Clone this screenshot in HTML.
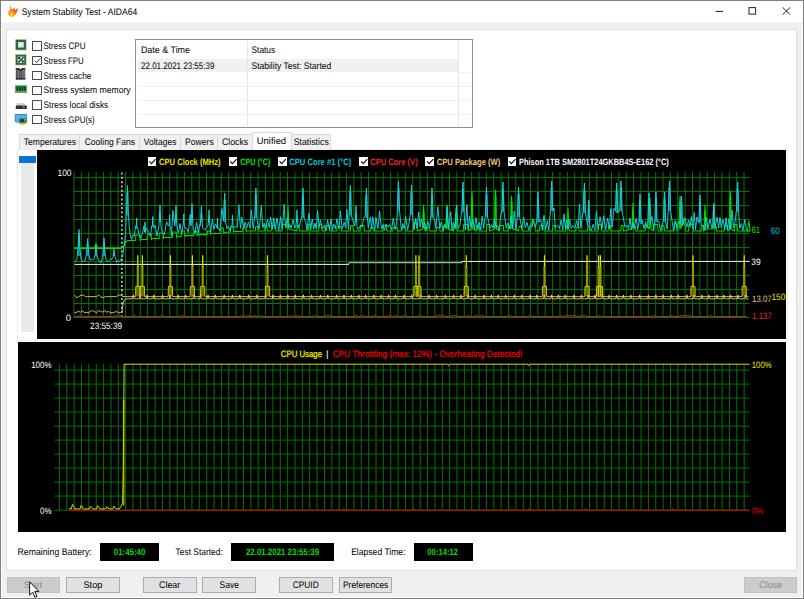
<!DOCTYPE html>
<html>
<head>
<meta charset="utf-8">
<title>System Stability Test - AIDA64</title>
<style>
html,body{margin:0;padding:0;}
body{width:804px;height:599px;position:relative;overflow:hidden;background:#f0f0f0;font-family:"Liberation Sans",sans-serif;font-size:9.6px;color:#000;}
.abs{position:absolute;display:block;}
.t{position:absolute;left:0;top:0;z-index:5;text-rendering:geometricPrecision;white-space:pre;line-height:14px;height:14px;transform-origin:0 0;font-family:"Liberation Sans",sans-serif;}
#win{position:absolute;left:0;top:0;width:804px;height:599px;box-sizing:border-box;border:1px solid #808080;box-shadow:inset 0 0 0 1px #fff;}
#title{position:absolute;left:1px;top:1px;width:802px;height:21px;background:#fff;border-bottom:1px solid #f6f6f6;}
#panel{position:absolute;left:6px;top:29.4px;width:791px;height:541.4px;box-sizing:border-box;background:#fff;border:1px solid #dfdfdf;}
.cb{position:absolute;left:32.2px;width:9.4px;height:9.4px;box-sizing:border-box;border:1px solid #4a4a4a;background:#fff;border-radius:0.6px;}
.lcb{position:absolute;top:157.4px;width:8.8px;height:8.8px;background:#fff;}
#list{position:absolute;left:135px;top:39px;width:338px;height:88.5px;box-sizing:border-box;border:1px solid #8a8f98;background:#fff;}
.hl{position:absolute;height:1px;background:#f0f0f0;left:138px;width:333px;}
.vl{position:absolute;width:1px;background:#e6e6e6;top:41px;}
.tab{position:absolute;top:134px;height:15.5px;box-sizing:border-box;border:1px solid #d9d9d9;border-bottom:none;background:#f0f0f0;}
.tab.sel{top:132px;height:18px;background:#fff;border-color:#d9d9d9;z-index:3;}
#pane{position:absolute;left:17px;top:148.5px;width:771px;height:192px;box-sizing:border-box;border:1px solid #ececec;background:#fff;}
.blk{position:absolute;background:#000;}
.btn{position:absolute;top:577px;height:15.6px;box-sizing:border-box;border:1px solid #adadad;background:#e1e1e1;}
.btn.dis{background:#cccccc;border-color:#bfbfbf;}
</style>
</head>
<body>
<div id="win"></div>
<div id="title"></div>
<!-- app icon (flame) -->
<svg class="abs" style="left:8px;top:5px" width="10.2" height="12.2" viewBox="0 0 10.2 12.2">
<defs><radialGradient id="fl" cx="0.36" cy="0.78" r="0.55"><stop offset="0" stop-color="#fff04a"/><stop offset="0.22" stop-color="#ffc31a"/><stop offset="0.55" stop-color="#fb7a12"/><stop offset="1" stop-color="#f2560c"/></radialGradient></defs>
<path d="M2,0 C2.9,1.6 3.4,3 3.7,4.6 C4.6,4.4 5.6,3.8 6.3,2.8 C6.7,3.6 6.9,4.4 7.1,5.2 C8,4.8 9,4 9.9,3 C9.9,5 9.4,6.8 8.3,8.3 C7.2,9.9 5.8,11.4 4,11.9 C2.6,11.7 1.4,10.9 0.9,10 C0.3,9.2 0,8.3 0.3,7.6 C0.7,7.6 1,7.5 1.3,7.3 C0.8,6.9 0.5,6.5 0.2,5.9 C0.9,6.1 1.6,6.1 2.1,5.8 C2.5,4 2.5,2 2,0Z" fill="url(#fl)"/>
</svg>
<!-- window controls -->
<svg class="abs" style="left:700px;top:0" width="104" height="23" viewBox="0 0 104 23">
<path d="M15.6,11.4H23.2" stroke="#222" stroke-width="1.05" fill="none"/>
<rect x="49" y="7.6" width="6.6" height="6.6" stroke="#222" stroke-width="1" fill="none"/>
<path d="M82.6,7.3L90.2,14.7M90.2,7.3L82.6,14.7" stroke="#222" stroke-width="1" fill="none"/>
</svg>

<div id="panel"></div>

<!-- stress checkboxes -->
<div class="cb" style="top:41.4px"></div>
<div class="cb" style="top:56.1px"></div>
<div class="cb" style="top:70.8px"></div>
<div class="cb" style="top:85.5px"></div>
<div class="cb" style="top:100.2px"></div>
<div class="cb" style="top:114.9px"></div>
<svg class="abs" style="left:32.6px;top:56.1px" width="9" height="9" viewBox="0 0 9 9"><path d="M1.8,4.6L3.7,6.5L7.4,2.4" stroke="#222" stroke-width="0.9" fill="none"/></svg>

<!-- stress icons -->
<svg class="abs" style="left:15px;top:39px" width="12" height="12" viewBox="0 0 12 12">
<rect x="0.3" y="0.3" width="11.2" height="11" fill="#c8a85a"/><rect x="0.9" y="0.9" width="10" height="9.8" fill="#1f6b45"/><rect x="3" y="3" width="5.8" height="5.6" fill="#d6dcd8"/><rect x="4.2" y="4.2" width="3.4" height="3.2" fill="#f3f3f3"/>
</svg>
<svg class="abs" style="left:15px;top:53.6px" width="12" height="12" viewBox="0 0 12 12">
<rect x="0.3" y="0.3" width="11.2" height="11" fill="#c8a85a"/><rect x="0.9" y="0.9" width="10" height="9.8" fill="#1f6b45"/><rect x="2.6" y="2.6" width="6.6" height="6.4" fill="#e4e8e4"/>
<path d="M3.3,8.5L8.5,3.1" stroke="#1a1a1a" stroke-width="1.1"/><circle cx="4.2" cy="4.2" r="1.15" fill="#1a1a1a"/><circle cx="7.7" cy="7.5" r="1.15" fill="#1a1a1a"/>
</svg>
<svg class="abs" style="left:15px;top:68.4px" width="12" height="12" viewBox="0 0 12 12">
<defs><linearGradient id="cg" x1="0" x2="1" y1="0" y2="0"><stop offset="0" stop-color="#4a4a4a"/><stop offset="0.3" stop-color="#8c8c8c"/><stop offset="0.55" stop-color="#5c5c5c"/><stop offset="0.8" stop-color="#9a9a9a"/><stop offset="1" stop-color="#555"/></linearGradient></defs>
<path d="M0.8,0.3H4.3L5.6,2L6.9,0.3H10.3V11.4H0.8Z" fill="url(#cg)"/>
<path d="M0.8,0.3H4.3L5.6,2L6.9,0.3H10.3V1.6L8.6,1.4L5.6,3.2L2.6,1.4L0.8,1.6Z" fill="#161616"/>
<rect x="0.8" y="10.3" width="9.5" height="1.1" fill="#111"/>
<path d="M2.6,3V10M4.4,3.6V10M6.6,3.6V10M8.4,3V10" stroke="#3c3c3c" stroke-width="0.6"/>
</svg>
<svg class="abs" style="left:14.6px;top:84.8px" width="12" height="9" viewBox="0 0 12 9">
<path d="M0.2,0.3H11.8V7.9H6.6V6.9H5.6V7.9H0.2Z" fill="#2f9a50"/>
<rect x="1.3" y="1.5" width="1.9" height="4.2" fill="#173f26"/><rect x="3.9" y="1.5" width="1.9" height="4.2" fill="#173f26"/><rect x="6.5" y="1.5" width="1.9" height="4.2" fill="#173f26"/><rect x="9" y="1.5" width="1.8" height="4.2" fill="#173f26"/>
<rect x="1.4" y="6.3" width="2.6" height="1.3" fill="#d9a02a"/><rect x="7.6" y="6.3" width="2.6" height="1.3" fill="#d9a02a"/>
<rect x="0.2" y="0.3" width="11.6" height="0.8" fill="#5cc47a"/>
</svg>
<svg class="abs" style="left:15px;top:102px" width="13" height="8" viewBox="0 0 13 8">
<path d="M2,1.1H9.4L10.6,3.8H0.9Z" fill="#d2d2d2"/>
<rect x="0.8" y="3.5" width="11" height="3.2" rx="0.5" fill="#2e2e2e"/>
<rect x="7.7" y="4.3" width="1.9" height="1.5" fill="#46c84e"/>
<rect x="0.8" y="6.3" width="11" height="0.5" fill="#111"/>
</svg>
<svg class="abs" style="left:14px;top:113px" width="14" height="13" viewBox="0 0 14 13">
<rect x="0.8" y="1" width="12" height="7.7" fill="#1f7ad6"/><rect x="1.6" y="1.8" width="10.4" height="6" fill="#58b2f6"/>
<path d="M1.2,8.7H5.4V10.5H2.4Z" fill="#9cc4e6"/>
<rect x="5.1" y="5.2" width="7.7" height="5.1" fill="#2f8a48"/><rect x="6.6" y="6.3" width="3.2" height="2.7" fill="#26302a"/><rect x="10.3" y="6.1" width="1.6" height="1.2" fill="#6cc486"/>
<rect x="6.2" y="10.3" width="4.6" height="1.3" fill="#f0921e"/>
</svg>

<!-- event list -->
<div id="list"></div>
<div class="abs" style="left:138px;top:58.6px;width:320.4px;height:13.8px;background:#f0f0f0"></div>
<div class="hl" style="top:86.3px"></div>
<div class="hl" style="top:100.3px"></div>
<div class="hl" style="top:114.2px"></div>
<div class="hl" style="top:72.4px;left:458.4px;width:13px"></div>
<div class="vl" style="left:247.2px;height:85px"></div>
<div class="vl" style="left:458.3px;height:85px"></div>

<!-- tabs -->
<div id="pane"></div>
<div class="tab" style="left:19.4px;width:61px"></div>
<div class="tab" style="left:79.4px;width:61px"></div>
<div class="tab" style="left:139.4px;width:42px"></div>
<div class="tab" style="left:180.4px;width:38px"></div>
<div class="tab" style="left:217.4px;width:36px"></div>
<div class="tab" style="left:290.4px;width:40.5px"></div>
<div class="tab sel" style="left:251.6px;width:40px"></div>

<!-- left strip in tab page -->
<div class="abs" style="left:21.3px;top:163px;width:13px;height:169.4px;background:#e7eaeb"></div>
<div class="abs" style="left:19.1px;top:156px;width:16.8px;height:6.8px;background:#0a72da"></div>

<!-- charts -->
<div class="blk" style="left:37px;top:150px;width:749.3px;height:188.5px"></div>
<div class="blk" style="left:18px;top:342.3px;width:768.3px;height:189.3px"></div>
<svg class="abs" style="left:37px;top:150px" width="749.3" height="188.5" viewBox="37 150 749.3 188.5">
<path d="M74.00,171.8V317.6M81.36,171.8V317.6M88.73,171.8V317.6M96.09,171.8V317.6M103.45,171.8V317.6M110.81,171.8V317.6M118.18,171.8V317.6M125.54,171.8V317.6M132.90,171.8V317.6M140.27,171.8V317.6M147.63,171.8V317.6M154.99,171.8V317.6M162.36,171.8V317.6M169.72,171.8V317.6M177.08,171.8V317.6M184.44,171.8V317.6M191.81,171.8V317.6M199.17,171.8V317.6M206.53,171.8V317.6M213.90,171.8V317.6M221.26,171.8V317.6M228.62,171.8V317.6M235.99,171.8V317.6M243.35,171.8V317.6M250.71,171.8V317.6M258.08,171.8V317.6M265.44,171.8V317.6M272.80,171.8V317.6M280.16,171.8V317.6M287.53,171.8V317.6M294.89,171.8V317.6M302.25,171.8V317.6M309.62,171.8V317.6M316.98,171.8V317.6M324.34,171.8V317.6M331.71,171.8V317.6M339.07,171.8V317.6M346.43,171.8V317.6M353.79,171.8V317.6M361.16,171.8V317.6M368.52,171.8V317.6M375.88,171.8V317.6M383.25,171.8V317.6M390.61,171.8V317.6M397.97,171.8V317.6M405.34,171.8V317.6M412.70,171.8V317.6M420.06,171.8V317.6M427.42,171.8V317.6M434.79,171.8V317.6M442.15,171.8V317.6M449.51,171.8V317.6M456.88,171.8V317.6M464.24,171.8V317.6M471.60,171.8V317.6M478.97,171.8V317.6M486.33,171.8V317.6M493.69,171.8V317.6M501.05,171.8V317.6M508.42,171.8V317.6M515.78,171.8V317.6M523.14,171.8V317.6M530.51,171.8V317.6M537.87,171.8V317.6M545.23,171.8V317.6M552.60,171.8V317.6M559.96,171.8V317.6M567.32,171.8V317.6M574.68,171.8V317.6M582.05,171.8V317.6M589.41,171.8V317.6M596.77,171.8V317.6M604.14,171.8V317.6M611.50,171.8V317.6M618.86,171.8V317.6M626.23,171.8V317.6M633.59,171.8V317.6M640.95,171.8V317.6M648.31,171.8V317.6M655.68,171.8V317.6M663.04,171.8V317.6M670.40,171.8V317.6M677.77,171.8V317.6M685.13,171.8V317.6M692.49,171.8V317.6M699.86,171.8V317.6M707.22,171.8V317.6M714.58,171.8V317.6M721.94,171.8V317.6M729.31,171.8V317.6M736.67,171.8V317.6M744.03,171.8V317.6M73.5,317.50H749.6M73.5,303.50H749.6M73.5,289.50H749.6M73.5,275.50H749.6M73.5,261.50H749.6M73.5,247.50H749.6M73.5,233.50H749.6M73.5,219.50H749.6M73.5,205.50H749.6M73.5,191.50H749.6M73.5,177.50H749.6" stroke="#007800" stroke-width="1" fill="none"/>
<path d="M121.9,172.4V317" stroke="#e4e4e4" stroke-width="1.4" stroke-dasharray="2.1 2.23" fill="none"/>
<path d="M74.5,316.5 L77.5,316.5 L80.5,315.9 L83.5,316.5 L86.5,316.5 L89.5,316.5 L92.5,316.5 L95.5,316.5 L98.5,316.5 L101.5,316.5 L104.5,316.5 L107.5,316.5 L110.5,316.5 L113.5,316.5 L116.5,315.9 L119.5,315.9 L122.5,316.5 L125.5,316.5 L128.5,316.5 L131.5,316.5 L134.5,315.9 L137.5,316.5 L140.5,316.5 L143.5,316.5 L146.5,316.5 L149.5,316.5 L152.5,316.5 L155.5,316.5 L158.5,316.5 L161.5,315.9 L164.5,316.5 L167.5,316.5 L170.5,316.5 L173.5,316.5 L176.5,316.5 L179.5,316.5 L182.5,315.9 L185.5,316.5 L188.5,316.5 L191.5,316.5 L194.5,316.5 L197.5,316.5 L200.5,316.5 L203.5,316.5 L206.5,316.5 L209.5,316.5 L212.5,316.5 L215.5,316.5 L218.5,316.5 L221.5,316.5 L224.5,316.5 L227.5,316.5 L230.5,316.5 L233.5,316.5 L236.5,316.5 L239.5,316.5 L242.5,315.9 L245.5,316.5 L248.5,315.9 L251.5,316.5 L254.5,315.9 L257.5,316.5 L260.5,315.9 L263.5,316.5 L266.5,316.5 L269.5,316.5 L272.5,316.5 L275.5,316.5 L278.5,316.5 L281.5,316.5 L284.5,316.5 L287.5,316.5 L290.5,315.9 L293.5,316.5 L296.5,315.9 L299.5,316.5 L302.5,316.5 L305.5,316.5 L308.5,316.5 L311.5,316.5 L314.5,315.9 L317.5,316.5 L320.5,316.5 L323.5,316.5 L326.5,315.9 L329.5,315.9 L332.5,316.5 L335.5,316.5 L338.5,316.5 L341.5,316.5 L344.5,316.5 L347.5,316.5 L350.5,316.5 L353.5,316.5 L356.5,315.9 L359.5,316.5 L362.5,315.9 L365.5,316.5 L368.5,316.5 L371.5,316.5 L374.5,315.9 L377.5,316.5 L380.5,316.5 L383.5,316.5 L386.5,316.5 L389.5,315.9 L392.5,316.5 L395.5,315.9 L398.5,316.5 L401.5,316.5 L404.5,315.9 L407.5,316.5 L410.5,316.5 L413.5,316.5 L416.5,316.5 L419.5,315.9 L422.5,316.5 L425.5,316.5 L428.5,316.5 L431.5,316.5 L434.5,316.5 L437.5,315.9 L440.5,315.9 L443.5,315.9 L446.5,316.5 L449.5,316.5 L452.5,315.9 L455.5,315.9 L458.5,316.5 L461.5,316.5 L464.5,316.5 L467.5,315.9 L470.5,316.5 L473.5,316.5 L476.5,315.9 L479.5,316.5 L482.5,315.9 L485.5,316.5 L488.5,316.5 L491.5,316.5 L494.5,316.5 L497.5,316.5 L500.5,316.5 L503.5,316.5 L506.5,316.5 L509.5,315.9 L512.5,316.5 L515.5,316.5 L518.5,316.5 L521.5,316.5 L524.5,316.5 L527.5,316.5 L530.5,315.9 L533.5,316.5 L536.5,316.5 L539.5,316.5 L542.5,316.5 L545.5,316.5 L548.5,316.5 L551.5,316.5 L554.5,316.5 L557.5,316.5 L560.5,315.9 L563.5,316.5 L566.5,315.9 L569.5,315.9 L572.5,315.9 L575.5,315.9 L578.5,316.5 L581.5,315.9 L584.5,315.9 L587.5,316.5 L590.5,316.5 L593.5,316.5 L596.5,316.5 L599.5,315.9 L602.5,316.5 L605.5,316.5 L608.5,316.5 L611.5,316.5 L614.5,316.5 L617.5,316.5 L620.5,316.5 L623.5,316.5 L626.5,316.5 L629.5,316.5 L632.5,316.5 L635.5,316.5 L638.5,316.5 L641.5,316.5 L644.5,316.5 L647.5,316.5 L650.5,316.5 L653.5,315.9 L656.5,316.5 L659.5,316.5 L662.5,316.5 L665.5,316.5 L668.5,316.5 L671.5,315.9 L674.5,316.5 L677.5,316.5 L680.5,315.9 L683.5,315.9 L686.5,315.9 L689.5,315.9 L692.5,316.5 L695.5,316.5 L698.5,316.5 L701.5,316.5 L704.5,316.5 L707.5,316.5 L710.5,315.9 L713.5,316.5 L716.5,316.5 L719.5,316.5 L722.5,316.5 L725.5,316.5 L728.5,316.5 L731.5,316.5 L734.5,316.5 L737.5,316.5 L740.5,316.5 L743.5,316.5 L746.5,316.5" stroke="#cc2222" stroke-width="1.05" fill="none"/>
<path d="M288.0,212.0V228.0M423.6,211.0V228.0M447.0,211.0V228.0M456.0,214.0V228.0M472.0,198.0V228.0M495.5,196.0V228.0M511.6,202.0V228.0M568.0,214.0V228.0M633.0,209.0V228.0M650.0,204.0V228.0M680.0,202.0V228.0M705.0,211.0V228.0M714.0,209.0V228.0M730.3,197.0V228.0" stroke="#009400" stroke-width="2.2" fill="none"/>
<path d="M74.5,248.2H121.5" stroke="#00c800" stroke-width="1.6" fill="none"/>
<path d="M74.5,248.2 L94.3,248.2 L96.0,243.8 L97.7,248.2 L121.5,248.2 L123.5,246.5 L125.5,242.0 L128.0,240.5 L129.0,240.5 L135.6,240.5 L135.9,235.0 L139.9,235.0 L140.2,240.5 L140.5,239.5 L147.2,239.5 L147.5,234.0 L151.2,234.0 L151.5,239.5 L151.8,238.5 L159.1,238.5 L159.4,233.0 L163.0,233.0 L163.3,238.5 L163.6,237.5 L172.3,237.5 L172.6,232.0 L176.3,232.0 L176.6,237.5 L176.9,236.4 L181.3,236.4 L181.6,230.9 L184.6,230.9 L184.9,236.4 L185.2,235.6 L193.7,235.6 L194.0,231.1 L196.9,231.1 L197.2,235.6 L197.5,234.6 L207.2,234.6 L207.5,231.1 L210.3,231.1 L210.6,234.6 L210.9,233.4 L220.6,233.4 L220.9,227.9 L223.5,227.9 L223.8,233.4 L224.1,232.3 L230.4,232.3 L230.7,226.8 L233.2,226.8 L233.5,232.3 L233.8,231.4 L242.7,231.4 L243.0,227.9 L245.9,227.9 L246.2,231.4 L246.5,231.0 L255.3,231.0 L255.6,226.5 L257.6,226.5 L257.9,231.0 L258.2,231.0 L264.6,231.0 L264.9,225.5 L267.0,225.5 L267.3,231.0 L267.6,231.0 L271.2,231.0 L271.5,225.5 L275.6,225.5 L275.9,231.0 L276.2,231.0 L282.0,231.0 L282.3,224.5 L286.4,224.5 L287.1,229.0 L287.7,214.0 L288.0,206.0 L288.3,214.0 L288.9,229.0 L296.9,231.0 L297.2,225.5 L299.0,225.5 L299.3,231.0 L299.6,231.0 L308.2,231.0 L308.5,224.5 L310.6,224.5 L310.9,231.0 L311.2,231.0 L318.8,231.0 L319.1,224.5 L321.7,224.5 L322.0,231.0 L322.3,231.0 L325.4,231.0 L325.7,225.5 L329.4,225.5 L329.7,231.0 L330.0,231.0 L336.7,231.0 L337.0,226.5 L341.1,226.5 L341.4,231.0 L341.7,231.0 L350.4,231.0 L350.7,225.5 L353.0,225.5 L353.3,231.0 L353.6,231.0 L360.1,231.0 L360.4,225.5 L364.0,225.5 L364.3,231.0 L364.6,231.0 L370.5,231.0 L370.8,227.5 L372.8,227.5 L373.1,231.0 L373.4,231.0 L382.7,231.0 L383.0,225.5 L386.4,225.5 L386.7,231.0 L387.0,231.0 L392.9,231.0 L393.2,227.5 L397.2,227.5 L397.5,231.0 L397.8,231.0 L401.9,231.0 L402.2,227.5 L405.2,227.5 L405.5,231.0 L405.8,231.0 L413.0,231.0 L413.3,225.5 L415.0,221.8 L417.0,225.5 L417.3,231.0 L417.6,231.0 L422.7,229.0 L423.3,213.0 L423.6,205.0 L423.9,213.0 L424.5,229.0 L425.6,231.0 L425.9,227.5 L429.0,227.5 L429.3,231.0 L429.6,231.0 L436.3,231.0 L436.6,227.5 L439.6,227.5 L439.9,231.0 L440.2,231.0 L443.6,231.0 L443.9,227.5 L444.8,224.0 L446.1,229.0 L446.7,213.0 L447.0,205.0 L447.3,213.0 L447.9,229.0 L453.6,231.0 L453.9,224.5 L455.1,229.0 L455.7,216.0 L456.0,208.0 L456.3,216.0 L456.9,229.0 L457.8,231.0 L458.1,231.0 L463.3,231.0 L463.6,224.5 L467.8,224.5 L468.1,231.0 L468.4,231.0 L471.1,229.0 L471.7,200.0 L472.0,192.0 L472.3,200.0 L472.9,229.0 L476.2,231.0 L476.5,225.5 L479.4,225.5 L479.7,231.0 L480.0,231.0 L486.5,231.0 L486.8,224.5 L489.1,224.5 L489.4,231.0 L489.7,231.0 L494.6,229.0 L495.2,198.0 L495.5,190.0 L495.8,198.0 L496.4,229.0 L499.2,231.0 L499.5,225.5 L503.4,225.5 L503.7,231.0 L504.0,231.0 L508.0,231.0 L508.3,224.5 L510.7,229.0 L511.3,204.0 L511.6,196.0 L511.9,204.0 L512.5,229.0 L518.6,231.0 L518.9,226.5 L521.7,226.5 L522.0,231.0 L522.3,231.0 L530.7,231.0 L531.0,225.5 L532.9,218.9 L535.0,225.5 L535.3,231.0 L535.6,231.0 L539.6,231.0 L539.9,225.5 L543.8,225.5 L544.1,231.0 L544.4,231.0 L552.6,231.0 L552.9,225.5 L554.9,225.5 L555.2,231.0 L555.5,231.0 L565.4,231.0 L565.7,225.5 L567.1,229.0 L567.7,216.0 L568.0,208.0 L568.3,216.0 L568.9,229.0 L569.8,231.0 L570.1,231.0 L575.9,231.0 L576.2,227.5 L578.9,227.5 L579.2,231.0 L579.5,231.0 L587.6,231.0 L587.9,226.5 L589.6,226.5 L589.9,231.0 L590.2,231.0 L598.2,231.0 L598.5,224.5 L601.1,224.5 L601.4,231.0 L601.7,231.0 L608.3,231.0 L608.6,225.5 L610.5,225.5 L610.8,231.0 L611.1,231.0 L620.9,231.0 L621.2,225.5 L623.1,225.5 L623.4,231.0 L623.7,231.0 L632.1,229.0 L632.7,211.0 L633.0,203.0 L633.3,211.0 L633.9,229.0 L635.5,226.5 L635.8,231.0 L636.1,231.0 L645.1,231.0 L645.4,224.5 L649.1,229.0 L649.7,206.0 L650.0,198.0 L650.3,206.0 L650.9,229.0 L653.4,231.0 L653.7,224.5 L657.7,224.5 L658.0,231.0 L658.3,231.0 L661.9,231.0 L662.2,225.5 L664.1,225.5 L664.4,231.0 L664.7,231.0 L674.0,231.0 L674.3,224.5 L675.3,221.1 L676.6,224.5 L676.9,231.0 L677.2,231.0 L679.1,229.0 L679.7,204.0 L680.0,196.0 L680.3,204.0 L680.9,229.0 L682.9,218.2 L685.0,225.5 L685.3,231.0 L685.6,231.0 L688.6,231.0 L688.9,224.5 L693.1,224.5 L693.4,231.0 L693.7,231.0 L701.1,231.0 L701.4,225.5 L703.2,225.5 L703.5,231.0 L704.1,229.0 L704.7,213.0 L705.0,205.0 L705.3,213.0 L705.9,229.0 L713.1,229.0 L713.7,211.0 L714.0,203.0 L714.3,211.0 L714.9,229.0 L716.2,226.5 L716.5,231.0 L716.8,231.0 L724.2,231.0 L724.5,225.5 L727.5,225.5 L727.8,231.0 L728.1,231.0 L729.4,229.0 L730.0,199.0 L730.3,191.0 L730.6,199.0 L731.2,229.0 L734.6,231.0 L734.9,224.5 L737.1,224.5 L737.4,231.0 L737.7,231.0 L747.7,231.0 L748.0,226.5 L748.7,221.0 L749.7,226.5 L750.0,231.0 L748.5,231.5" stroke="#00dc00" stroke-width="1.05" fill="none" stroke-linejoin="round"/>
<path d="M127.4,192.5V215.5M160.0,212.0V222.0M176.0,212.7V222.0M192.0,210.6V222.0M201.4,213.0V222.0M209.0,217.0V222.0M224.7,200.0V222.0M255.9,195.0V218.0M297.0,217.0V222.0M303.0,195.0V218.0M350.3,192.5V215.5M356.0,213.0V222.0M366.4,195.0V218.0M398.5,188.6V211.6M411.5,192.0V215.0M432.0,195.0V218.0M463.0,189.0V212.0M486.5,194.0V217.0M503.0,189.0V212.0M518.6,194.0V217.0M538.0,199.0V222.0M551.7,188.0V211.0M584.4,190.0V213.0M588.8,207.0V222.0M616.7,190.0V213.0M621.0,188.0V211.0M640.0,201.0V222.0M649.0,200.0V222.0M656.0,199.0V222.0M664.6,199.0V222.0M669.5,188.0V211.0M681.4,203.0V222.0M700.0,202.0V222.0M713.8,211.0V222.0M737.6,189.0V212.0M79.0,234.5V256.0M87.6,243.6V256.0M96.0,250.0V256.0M104.0,243.0V256.0M114.0,254.0V256.0" stroke="#178490" stroke-width="2.1" fill="none"/>
<path d="M74.5,262.3 L76.0,260.7 L77.0,258.8 L78.2,246.8 L79.0,229.5 L79.8,246.8 L81.0,259.2 L82.0,261.2 L83.5,261.2 L85.0,260.9 L85.6,258.8 L86.8,251.3 L87.6,238.6 L88.4,251.3 L89.6,259.2 L91.0,259.7 L92.5,259.8 L94.0,258.8 L95.2,254.5 L96.0,245.0 L96.8,254.5 L98.0,259.2 L98.5,259.5 L100.0,262.4 L101.5,262.3 L102.0,258.8 L103.2,251.0 L104.0,238.0 L104.8,251.0 L106.0,259.2 L107.5,262.0 L109.0,260.5 L110.5,259.2 L112.0,258.8 L113.2,256.5 L114.0,249.0 L114.8,256.5 L116.0,259.2 L116.5,262.3 L118.0,261.0 L119.5,261.4 L121.0,259.2 L122.5,257.0 L124.0,246.0 L125.4,236.0 L126.4,214.0 L127.4,185.5 L128.3,212.0 L129.2,226.0 L130.4,236.0 L131.5,239.3 L132.9,235.1 L134.4,236.1 L135.6,226.0 L136.2,228.0 L136.7,218.0 L137.1,229.0 L137.8,228.0 L138.8,233.8 L140.6,238.3 L142.5,233.4 L143.9,226.0 L144.6,232.0 L145.0,222.0 L145.4,233.0 L146.1,228.0 L148.6,232.3 L150.5,236.1 L151.7,226.0 L152.4,226.5 L152.8,216.5 L153.2,227.5 L153.9,228.0 L155.2,225.0 L156.9,236.2 L158.9,226.0 L159.6,215.0 L160.0,205.0 L160.4,216.0 L161.1,228.0 L162.5,232.4 L164.4,234.5 L166.5,221.8 L168.5,226.0 L169.2,225.0 L169.6,215.0 L170.0,226.0 L170.7,228.0 L171.5,235.6 L172.9,210.5 L174.9,226.0 L175.6,215.7 L176.0,205.7 L176.4,216.7 L177.1,228.0 L178.5,232.8 L180.0,223.5 L181.7,233.9 L182.7,226.0 L183.4,224.0 L183.8,214.0 L184.2,225.0 L184.9,228.0 L186.9,228.5 L188.4,232.7 L190.2,214.4 L190.9,226.0 L191.6,213.6 L192.0,203.6 L192.4,214.6 L193.1,228.0 L195.0,233.4 L196.6,222.0 L198.3,233.1 L199.6,224.7 L200.3,226.0 L201.0,216.0 L201.4,206.0 L201.8,217.0 L202.5,228.0 L205.0,230.2 L206.3,227.9 L207.9,226.0 L208.6,220.0 L209.0,210.0 L209.4,221.0 L210.1,228.0 L210.7,231.8 L212.4,219.5 L213.7,229.4 L215.5,224.0 L216.4,226.0 L217.1,228.0 L217.5,218.0 L217.9,229.0 L218.6,228.0 L219.9,230.9 L222.0,208.6 L223.6,221.0 L224.2,203.0 L224.7,193.0 L225.1,204.0 L225.8,223.0 L226.8,228.6 L228.3,226.4 L230.1,230.9 L231.4,226.0 L232.1,225.0 L232.5,215.0 L232.9,226.0 L233.6,228.0 L235.6,226.0 L237.2,227.6 L238.9,204.8 L240.4,228.4 L241.8,217.3 L243.8,228.7 L245.1,221.9 L246.6,228.0 L248.4,221.9 L250.0,228.2 L251.3,210.0 L253.2,228.7 L254.8,216.0 L255.5,198.0 L255.9,188.0 L256.4,199.0 L257.0,218.0 L257.8,224.3 L259.3,229.3 L261.3,205.6 L262.8,227.9 L264.2,223.3 L265.8,228.6 L267.4,219.1 L269.3,227.6 L270.6,217.0 L272.3,229.1 L273.8,217.9 L275.1,229.1 L277.0,218.0 L278.7,230.4 L280.7,216.7 L282.3,229.0 L284.2,204.3 L285.5,227.6 L287.4,217.5 L288.6,227.8 L289.8,224.7 L291.1,228.1 L293.1,219.7 L294.7,227.9 L295.9,226.0 L296.6,220.0 L297.0,210.0 L297.4,221.0 L298.1,228.0 L299.3,226.0 L301.9,216.0 L302.6,198.0 L303.0,188.0 L303.4,199.0 L304.1,218.0 L305.8,221.9 L307.0,230.0 L309.0,213.3 L310.6,229.3 L312.3,219.0 L313.8,229.2 L315.0,223.1 L316.3,228.9 L317.6,210.4 L319.1,227.4 L320.4,219.8 L322.4,228.9 L324.4,225.4 L326.4,230.5 L327.6,220.0 L329.5,230.0 L331.1,218.9 L332.4,230.4 L333.7,224.1 L335.4,229.0 L336.9,218.7 L339.0,229.1 L340.3,211.0 L342.3,228.6 L344.2,222.2 L345.6,227.7 L346.9,209.5 L348.5,229.5 L349.2,213.5 L349.9,195.5 L350.3,185.5 L350.8,196.5 L351.4,215.5 L353.4,222.2 L354.9,226.0 L355.6,216.0 L356.0,206.0 L356.4,217.0 L357.1,228.0 L358.2,229.5 L360.3,225.6 L362.1,227.3 L363.5,218.8 L365.3,216.0 L365.9,198.0 L366.4,188.0 L366.8,199.0 L367.5,218.0 L368.3,227.8 L370.3,216.9 L371.6,228.9 L372.8,216.7 L374.6,230.1 L376.0,217.4 L377.9,228.5 L379.6,211.1 L381.4,228.9 L383.1,224.4 L384.4,230.4 L386.1,223.9 L388.2,227.1 L389.6,224.7 L391.6,229.8 L393.2,218.3 L395.1,229.6 L396.6,223.3 L397.4,209.6 L398.1,191.6 L398.5,181.6 L398.9,192.6 L399.6,211.6 L401.4,230.0 L402.7,223.5 L404.3,228.3 L405.6,215.9 L407.6,229.8 L409.2,222.3 L410.4,213.0 L411.1,195.0 L411.5,185.0 L411.9,196.0 L412.6,215.0 L414.0,230.0 L415.8,218.3 L417.0,228.3 L418.8,211.9 L420.1,227.0 L421.3,218.7 L423.2,227.7 L424.8,222.3 L426.1,230.6 L427.7,221.2 L429.6,228.2 L430.9,216.0 L431.6,198.0 L432.0,188.0 L432.4,199.0 L433.1,218.0 L434.6,219.3 L435.9,227.9 L437.9,206.8 L439.8,228.3 L441.3,222.0 L442.9,230.1 L444.2,225.1 L445.8,227.8 L447.1,206.3 L448.6,228.6 L450.7,211.8 L452.0,230.1 L453.3,222.2 L455.2,227.7 L456.7,205.0 L458.1,228.5 L459.9,225.1 L461.9,210.0 L462.6,192.0 L463.0,182.0 L463.4,193.0 L464.1,212.0 L465.3,230.0 L466.9,204.7 L468.2,229.4 L469.6,216.3 L470.9,227.4 L472.9,219.3 L474.4,229.3 L476.0,217.5 L477.8,229.6 L479.2,222.1 L480.9,230.0 L482.1,216.1 L483.7,228.4 L485.4,215.0 L486.1,197.0 L486.5,187.0 L486.9,198.0 L487.6,217.0 L488.7,222.3 L490.3,228.3 L491.6,224.7 L493.1,228.0 L494.3,218.5 L496.1,227.8 L497.3,225.3 L499.2,230.3 L500.5,217.1 L501.9,210.0 L502.6,192.0 L503.0,182.0 L503.4,193.0 L504.1,212.0 L506.2,228.4 L507.6,222.8 L509.6,229.0 L511.1,216.4 L512.8,228.4 L514.2,211.2 L516.0,229.7 L517.5,215.0 L518.1,197.0 L518.6,187.0 L519.1,198.0 L519.7,217.0 L521.8,228.8 L523.6,217.0 L525.3,227.5 L527.1,222.3 L528.7,230.2 L530.2,225.2 L531.9,227.2 L533.4,220.8 L535.4,227.5 L536.9,220.0 L537.5,202.0 L538.0,192.0 L538.5,203.0 L539.1,222.0 L540.8,219.7 L542.3,230.5 L544.0,215.3 L545.7,229.6 L547.4,220.7 L548.8,230.2 L550.6,209.0 L551.2,191.0 L551.7,181.0 L552.2,192.0 L552.8,211.0 L553.9,208.0 L555.3,227.7 L557.4,225.4 L559.4,228.5 L561.1,220.0 L562.8,230.1 L564.0,213.8 L565.3,227.3 L566.6,219.9 L568.0,229.2 L569.7,219.6 L571.2,228.4 L572.9,225.4 L575.0,228.0 L576.6,220.6 L578.2,227.3 L579.5,204.0 L580.9,228.3 L582.2,217.1 L583.3,211.0 L583.9,193.0 L584.4,183.0 L584.9,194.0 L585.5,213.0 L587.7,226.0 L588.3,210.0 L588.8,200.0 L589.2,211.0 L589.9,228.0 L591.4,230.4 L593.1,224.3 L595.0,229.9 L596.4,211.3 L598.1,229.3 L600.1,216.8 L602.0,228.7 L603.7,215.7 L605.7,229.8 L607.7,218.1 L609.4,228.6 L610.8,208.5 L612.1,227.1 L614.0,208.3 L615.6,211.0 L616.2,193.0 L616.7,183.0 L617.2,194.0 L617.8,213.0 L619.9,209.0 L620.5,191.0 L621.0,181.0 L621.5,192.0 L622.1,211.0 L622.9,215.6 L625.0,227.3 L626.9,225.1 L628.6,228.9 L630.0,218.1 L631.4,229.5 L632.9,222.5 L634.1,227.9 L636.1,218.3 L637.8,229.6 L638.9,222.0 L639.5,204.0 L640.0,194.0 L640.5,205.0 L641.1,224.0 L642.2,220.3 L644.1,228.6 L645.6,221.6 L647.0,227.9 L647.9,221.0 L648.5,203.0 L649.0,193.0 L649.5,204.0 L650.1,223.0 L651.9,216.4 L653.7,230.1 L654.9,220.0 L655.5,202.0 L656.0,192.0 L656.5,203.0 L657.1,222.0 L658.8,221.1 L660.5,230.3 L662.0,225.0 L663.5,220.0 L664.1,202.0 L664.6,192.0 L665.1,203.0 L665.7,222.0 L667.1,229.1 L668.4,209.0 L669.0,191.0 L669.5,181.0 L670.0,192.0 L670.6,211.0 L671.9,220.1 L673.6,230.6 L675.3,220.8 L676.9,228.7 L678.4,221.4 L680.3,224.0 L680.9,206.0 L681.4,196.0 L681.9,207.0 L682.5,226.0 L684.9,217.7 L686.8,227.1 L688.6,220.0 L690.0,227.2 L691.4,216.5 L692.8,228.3 L694.2,212.4 L695.6,229.7 L696.9,216.9 L698.9,223.0 L699.5,205.0 L700.0,195.0 L700.5,206.0 L701.1,225.0 L703.0,225.8 L704.9,230.7 L706.3,217.5 L708.0,228.3 L710.0,219.3 L712.0,228.3 L712.7,226.0 L713.3,214.0 L713.8,204.0 L714.2,215.0 L714.9,228.0 L717.1,217.1 L718.7,228.1 L720.0,217.5 L721.2,227.5 L722.9,219.4 L724.9,229.5 L726.1,217.7 L727.4,229.8 L728.8,218.8 L730.2,229.4 L732.2,210.3 L733.4,227.8 L734.9,222.6 L736.5,210.0 L737.1,192.0 L737.6,182.0 L738.1,193.0 L738.7,212.0 L739.7,228.4 L741.5,223.5 L742.8,230.4 L744.8,219.7 L746.5,230.3 L748.5,231.0" stroke="#18d4e2" stroke-width="0.95" fill="none" stroke-linejoin="round"/>
<path d="M74.5,264.4H349" stroke="#f4f4f4" stroke-width="1" fill="none"/>
<path d="M348,264L349.6,262.6H462" stroke="#a8a8a8" stroke-width="1.2" fill="none"/>
<path d="M461,262.4L463,261.4H749.6" stroke="#f4f4f4" stroke-width="1" fill="none"/>
<path d="M137.8,287V296.4M142.4,287V296.4M170.4,287V296.4M192.4,287V296.4M202.7,287V296.4M267.5,287V296.4M415.9,287V296.4M419.0,287V296.4M466.3,287V296.4M544.5,287V296.4M587.0,287V296.4M598.6,287V296.4M600.5,287V296.4M693.0,287V296.4M744.2,287V296.4" stroke="#6c6c00" stroke-width="3.4" fill="none"/>
<path d="M137.8,266V286.6M142.4,266V286.6M170.4,266V286.6M192.4,266V286.6M202.7,266V286.6M267.5,266V286.6M415.9,266V286.6M419.0,266V286.6M466.3,266V286.6M544.5,266V286.6M587.0,266V286.6M598.6,266V286.6M600.5,266V286.6M693.0,266V286.6M744.2,266V286.6" stroke="#969600" stroke-width="2.2" fill="none"/>
<path d="M137.8,255.2V266.4M142.4,255.2V266.4M170.4,255.2V266.4M192.4,255.2V266.4M202.7,255.2V266.4M267.5,255.2V266.4M415.9,255.2V266.4M419.0,255.2V266.4M466.3,255.2V266.4M544.5,255.2V266.4M587.0,255.2V266.4M598.6,255.2V266.4M600.5,255.2V266.4M693.0,255.2V266.4M744.2,255.2V266.4" stroke="#e4e400" stroke-width="1.25" fill="none"/>
<path d="M74.5,295.1 L76.7,297.8 L78.9,296.6 L81.1,295.1 L83.3,295.1 L85.5,296.6 L87.7,296.6 L89.9,296.6 L92.1,296.6 L94.3,296.6 L96.5,296.6 L98.7,295.1 L100.9,296.6 L103.1,297.8 L105.3,296.6 L107.5,296.6 L109.7,296.6 L111.9,296.6 L114.1,296.6 L116.3,296.6 L118.5,295.1 L120.7,295.1 L123.0,296.6 L135.6,296.6 L135.8,286.4 L139.8,286.4 L140.0,296.6 L140.2,296.6 L140.4,286.4 L144.4,286.4 L144.6,296.6 L168.2,296.6 L168.4,286.4 L172.4,286.4 L172.6,296.6 L190.2,296.6 L190.4,286.4 L194.4,286.4 L194.6,296.6 L200.5,296.6 L200.7,286.4 L204.7,286.4 L204.9,296.6 L265.3,296.6 L265.5,286.4 L269.5,286.4 L269.7,296.6 L413.7,296.6 L413.9,286.4 L417.9,286.4 L418.1,296.6 L416.8,296.6 L417.0,286.4 L421.0,286.4 L421.2,296.6 L464.1,296.6 L464.3,286.4 L468.3,286.4 L468.5,296.6 L542.3,296.6 L542.5,286.4 L546.5,286.4 L546.7,296.6 L584.8,296.6 L585.0,286.4 L589.0,286.4 L589.2,296.6 L596.4,296.6 L596.6,286.4 L600.6,286.4 L600.8,296.6 L598.3,296.6 L598.5,286.4 L602.5,286.4 L602.7,296.6 L690.8,296.6 L691.0,286.4 L695.0,286.4 L695.2,296.6 L742.0,296.6 L742.2,286.4 L746.2,286.4 L746.4,296.6 L748.5,296.6" stroke="#e0e000" stroke-width="0.9" fill="none" stroke-linejoin="round"/>
<path d="M74.5,312.8 L76.5,312.2 L78.5,311.4 L80.5,312.2 L82.5,310.6 L84.5,312.8 L86.5,312.2 L88.5,312.8 L90.5,311.4 L92.5,310.6 L94.5,311.4 L96.5,312.8 L98.5,310.6 L100.5,311.4 L102.5,312.2 L104.5,310.6 L106.5,312.2 L108.5,311.4 L110.5,312.8 L112.5,312.8 L114.5,312.2 L116.5,311.4 L118.5,312.8 L120.5,312.8 L122.0,311.5 L123.2,303.0 L124.5,299.5 L127.0,298.8 L130.0,298.8 L132.7,298.7 L133.4,294.9 L134.1,298.7 L136.4,298.9 L136.8,298.8 L139.5,298.7 L140.2,294.9 L140.9,298.7 L143.2,298.9 L143.6,298.8 L146.3,298.7 L147.0,294.9 L147.7,298.7 L150.0,298.9 L150.4,298.8 L153.1,298.7 L153.8,294.9 L154.5,298.7 L156.8,298.9 L159.2,298.8 L161.9,298.7 L162.6,294.9 L163.3,298.7 L165.6,298.9 L166.6,298.8 L169.3,298.7 L170.0,294.9 L170.7,298.7 L173.0,298.9 L174.8,298.8 L177.5,298.7 L178.2,294.9 L178.9,298.7 L181.2,298.9 L182.2,298.8 L184.9,298.7 L185.6,294.9 L186.3,298.7 L188.6,298.9 L190.4,298.8 L193.1,298.7 L193.8,294.9 L194.5,298.7 L196.8,298.9 L197.2,298.8 L199.9,298.7 L200.6,294.9 L201.3,298.7 L203.6,298.9 L204.6,298.8 L207.3,298.7 L208.0,294.9 L208.7,298.7 L211.0,298.9 L212.0,298.8 L214.7,298.7 L215.4,294.9 L216.1,298.7 L218.4,298.9 L220.8,298.8 L223.5,298.7 L224.2,294.9 L224.9,298.7 L227.2,298.9 L229.0,298.8 L231.7,298.7 L232.4,294.9 L233.1,298.7 L235.4,298.9 L236.4,298.8 L239.1,298.7 L239.8,294.9 L240.5,298.7 L242.8,298.9 L245.2,298.8 L247.9,298.7 L248.6,294.9 L249.3,298.7 L251.6,298.9 L253.4,298.8 L256.1,298.7 L256.8,294.9 L257.5,298.7 L259.8,298.9 L262.2,298.8 L264.9,298.7 L265.6,294.9 L266.3,298.7 L268.6,298.9 L269.6,298.8 L272.3,298.7 L273.0,294.9 L273.7,298.7 L276.0,298.9 L277.0,298.8 L279.7,298.7 L280.4,294.9 L281.1,298.7 L283.4,298.9 L284.4,298.8 L287.1,298.7 L287.8,294.9 L288.5,298.7 L290.8,298.9 L291.8,298.8 L294.5,298.7 L295.2,294.9 L295.9,298.7 L298.2,298.9 L300.0,298.8 L302.7,298.7 L303.4,294.9 L304.1,298.7 L306.4,298.9 L308.2,298.8 L310.9,298.7 L311.6,294.9 L312.3,298.7 L314.6,298.9 L317.0,298.8 L319.7,298.7 L320.4,294.9 L321.1,298.7 L323.4,298.9 L324.4,298.8 L327.1,298.7 L327.8,294.9 L328.5,298.7 L330.8,298.9 L333.2,298.8 L335.9,298.7 L336.6,294.9 L337.3,298.7 L339.6,298.9 L340.6,298.8 L343.3,298.7 L344.0,294.9 L344.7,298.7 L347.0,298.9 L348.0,298.8 L350.7,298.7 L351.4,294.9 L352.1,298.7 L354.4,298.9 L355.4,298.8 L358.1,298.7 L358.8,294.9 L359.5,298.7 L361.8,298.9 L362.2,298.8 L364.9,298.7 L365.6,294.9 L366.3,298.7 L368.6,298.9 L370.4,298.8 L373.1,298.7 L373.8,294.9 L374.5,298.7 L376.8,298.9 L377.8,298.8 L380.5,298.7 L381.2,294.9 L381.9,298.7 L384.2,298.9 L385.2,298.8 L387.9,298.7 L388.6,294.9 L389.3,298.7 L391.6,298.9 L392.0,298.8 L394.7,298.7 L395.4,294.9 L396.1,298.7 L398.4,298.9 L400.8,298.8 L403.5,298.7 L404.2,294.9 L404.9,298.7 L407.2,298.9 L408.2,298.8 L410.9,298.7 L411.6,294.9 L412.3,298.7 L414.6,298.9 L417.0,298.8 L419.7,298.7 L420.4,294.9 L421.1,298.7 L423.4,298.9 L425.8,298.8 L428.5,298.7 L429.2,294.9 L429.9,298.7 L432.2,298.9 L433.2,298.8 L435.9,298.7 L436.6,294.9 L437.3,298.7 L439.6,298.9 L442.0,298.8 L444.7,298.7 L445.4,294.9 L446.1,298.7 L448.4,298.9 L450.2,298.8 L452.9,298.7 L453.6,294.9 L454.3,298.7 L456.6,298.9 L457.6,298.8 L460.3,298.7 L461.0,294.9 L461.7,298.7 L464.0,298.9 L464.4,298.8 L467.1,298.7 L467.8,294.9 L468.5,298.7 L470.8,298.9 L471.8,298.8 L474.5,298.7 L475.2,294.9 L475.9,298.7 L478.2,298.9 L480.6,298.8 L483.3,298.7 L484.0,294.9 L484.7,298.7 L487.0,298.9 L488.0,298.8 L490.7,298.7 L491.4,294.9 L492.1,298.7 L494.4,298.9 L494.8,298.8 L497.5,298.7 L498.2,294.9 L498.9,298.7 L501.2,298.9 L502.2,298.8 L504.9,298.7 L505.6,294.9 L506.3,298.7 L508.6,298.9 L511.0,298.8 L513.7,298.7 L514.4,294.9 L515.1,298.7 L517.4,298.9 L518.4,298.8 L521.1,298.7 L521.8,294.9 L522.5,298.7 L524.8,298.9 L526.6,298.8 L529.3,298.7 L530.0,294.9 L530.7,298.7 L533.0,298.9 L533.4,298.8 L536.1,298.7 L536.8,294.9 L537.5,298.7 L539.8,298.9 L540.8,298.8 L543.5,298.7 L544.2,294.9 L544.9,298.7 L547.2,298.9 L548.2,298.8 L550.9,298.7 L551.6,294.9 L552.3,298.7 L554.6,298.9 L555.0,298.8 L557.7,298.7 L558.4,294.9 L559.1,298.7 L561.4,298.9 L561.8,298.8 L564.5,298.7 L565.2,294.9 L565.9,298.7 L568.2,298.9 L570.6,298.8 L573.3,298.7 L574.0,294.9 L574.7,298.7 L577.0,298.9 L578.0,298.8 L580.7,298.7 L581.4,294.9 L582.1,298.7 L584.4,298.9 L584.8,298.8 L587.5,298.7 L588.2,294.9 L588.9,298.7 L591.2,298.9 L591.6,298.8 L594.3,298.7 L595.0,294.9 L595.7,298.7 L598.0,298.9 L599.0,298.8 L601.7,298.7 L602.4,294.9 L603.1,298.7 L605.4,298.9 L605.8,298.8 L608.5,298.7 L609.2,294.9 L609.9,298.7 L612.2,298.9 L613.2,298.8 L615.9,298.7 L616.6,294.9 L617.3,298.7 L619.6,298.9 L620.0,298.8 L622.7,298.7 L623.4,294.9 L624.1,298.7 L626.4,298.9 L627.4,298.8 L630.1,298.7 L630.8,294.9 L631.5,298.7 L633.8,298.9 L636.2,298.8 L638.9,298.7 L639.6,294.9 L640.3,298.7 L642.6,298.9 L645.0,298.8 L647.7,298.7 L648.4,294.9 L649.1,298.7 L651.4,298.9 L652.4,298.8 L655.1,298.7 L655.8,294.9 L656.5,298.7 L658.8,298.9 L659.8,298.8 L662.5,298.7 L663.2,294.9 L663.9,298.7 L666.2,298.9 L668.0,298.8 L670.7,298.7 L671.4,294.9 L672.1,298.7 L674.4,298.9 L674.8,298.8 L677.5,298.7 L678.2,294.9 L678.9,298.7 L681.2,298.9 L683.6,298.8 L686.3,298.7 L687.0,294.9 L687.7,298.7 L690.0,298.9 L690.4,298.8 L693.1,298.7 L693.8,294.9 L694.5,298.7 L696.8,298.9 L698.6,298.8 L701.3,298.7 L702.0,294.9 L702.7,298.7 L705.0,298.9 L705.4,298.8 L708.1,298.7 L708.8,294.9 L709.5,298.7 L711.8,298.9 L713.6,298.8 L716.3,298.7 L717.0,294.9 L717.7,298.7 L720.0,298.9 L720.4,298.8 L723.1,298.7 L723.8,294.9 L724.5,298.7 L726.8,298.9 L727.2,298.8 L729.9,298.7 L730.6,294.9 L731.3,298.7 L733.6,298.9 L734.6,298.8 L737.3,298.7 L738.0,294.9 L738.7,298.7 L741.0,298.9 L742.0,298.8 L744.7,298.7 L745.4,294.9 L746.1,298.7 L748.4,298.9 L748.5,299.0" stroke="#f0cc82" stroke-width="0.9" fill="none" stroke-linejoin="round"/>
</svg>
<svg class="abs" style="left:18px;top:342.3px" width="768.3" height="189.3" viewBox="18 342.3 768.3 189.3">
<path d="M59.40,364V510.6M66.76,364V510.6M74.13,364V510.6M81.49,364V510.6M88.85,364V510.6M96.22,364V510.6M103.58,364V510.6M110.94,364V510.6M118.30,364V510.6M125.67,364V510.6M133.03,364V510.6M140.39,364V510.6M147.76,364V510.6M155.12,364V510.6M162.48,364V510.6M169.84,364V510.6M177.21,364V510.6M184.57,364V510.6M191.93,364V510.6M199.30,364V510.6M206.66,364V510.6M214.02,364V510.6M221.39,364V510.6M228.75,364V510.6M236.11,364V510.6M243.48,364V510.6M250.84,364V510.6M258.20,364V510.6M265.56,364V510.6M272.93,364V510.6M280.29,364V510.6M287.65,364V510.6M295.02,364V510.6M302.38,364V510.6M309.74,364V510.6M317.11,364V510.6M324.47,364V510.6M331.83,364V510.6M339.19,364V510.6M346.56,364V510.6M353.92,364V510.6M361.28,364V510.6M368.65,364V510.6M376.01,364V510.6M383.37,364V510.6M390.74,364V510.6M398.10,364V510.6M405.46,364V510.6M412.82,364V510.6M420.19,364V510.6M427.55,364V510.6M434.91,364V510.6M442.28,364V510.6M449.64,364V510.6M457.00,364V510.6M464.37,364V510.6M471.73,364V510.6M479.09,364V510.6M486.45,364V510.6M493.82,364V510.6M501.18,364V510.6M508.54,364V510.6M515.91,364V510.6M523.27,364V510.6M530.63,364V510.6M538.00,364V510.6M545.36,364V510.6M552.72,364V510.6M560.08,364V510.6M567.45,364V510.6M574.81,364V510.6M582.17,364V510.6M589.54,364V510.6M596.90,364V510.6M604.26,364V510.6M611.62,364V510.6M618.99,364V510.6M626.35,364V510.6M633.71,364V510.6M641.08,364V510.6M648.44,364V510.6M655.80,364V510.6M663.17,364V510.6M670.53,364V510.6M677.89,364V510.6M685.25,364V510.6M692.62,364V510.6M699.98,364V510.6M707.34,364V510.6M714.71,364V510.6M722.07,364V510.6M729.43,364V510.6M736.80,364V510.6M744.16,364V510.6M54.5,510.40H749.6M54.5,496.40H749.6M54.5,482.40H749.6M54.5,468.40H749.6M54.5,454.40H749.6M54.5,440.40H749.6M54.5,426.40H749.6M54.5,412.40H749.6M54.5,398.40H749.6M54.5,384.40H749.6M54.5,370.40H749.6" stroke="#007600" stroke-width="1" fill="none"/>
<path d="M69.0,510.5 L269.5,510.5 L270.5,509.0 L271.5,510.5 L343.0,510.5 L344.0,509.0 L345.0,510.5 L413.0,510.5 L414.0,509.0 L415.0,510.5 L511.0,510.5 L512.0,509.0 L513.0,510.5 L528.0,510.5 L529.0,509.0 L530.0,510.5 L584.5,510.5 L585.5,509.0 L586.5,510.5 L672.0,510.5 L673.0,509.0 L674.0,510.5 L749.6,510.5" stroke="#e60000" stroke-width="1.05" fill="none"/>
<path d="M123.7,400V506" stroke="#8e8e00" stroke-width="1.7" fill="none"/>
<path d="M69.0,508.6 L71.2,509.3 L72.5,504.6 L73.3,505.8 L74.6,509.2 L79.9,509.3 L81.2,505.6 L82.0,506.8 L83.3,509.2 L89.2,509.3 L90.5,506.6 L91.3,507.8 L92.6,509.2 L96.4,509.3 L97.7,506.0 L98.5,507.2 L99.8,509.2 L105.6,509.3 L106.9,507.0 L107.7,508.2 L109.0,509.2 L112.8,509.3 L114.1,506.4 L114.9,507.6 L116.2,509.2 L119.2,509.3 L121.2,506.5 L122.6,503.5 L123.3,470.0 L123.7,419.0 L124.1,364.5 L447.7,364.5 L448.5,365.9 L449.3,364.5 L527.7,364.5 L528.5,366.1 L529.3,364.5 L749.6,364.5" stroke="#d8d800" stroke-width="1" fill="none" stroke-linejoin="round"/>
</svg>

<!-- legend checkboxes -->
<div class="lcb" style="left:147.6px"></div>
<div class="lcb" style="left:228.5px"></div>
<div class="lcb" style="left:277.8px"></div>
<div class="lcb" style="left:359.3px"></div>
<div class="lcb" style="left:425.3px"></div>
<div class="lcb" style="left:507.5px"></div>
<svg class="abs" style="left:147.6px;top:157.4px" width="370" height="9" viewBox="0 0 370 9">
<g stroke="#111" stroke-width="1.2" fill="none">
<path d="M1.4,4.4L3.5,6.6L7.6,2.1"/>
<path d="M1.4,4.4L3.5,6.6L7.6,2.1" transform="translate(80.9 0)"/>
<path d="M1.4,4.4L3.5,6.6L7.6,2.1" transform="translate(130.2 0)"/>
<path d="M1.4,4.4L3.5,6.6L7.6,2.1" transform="translate(211.7 0)"/>
<path d="M1.4,4.4L3.5,6.6L7.6,2.1" transform="translate(277.7 0)"/>
<path d="M1.4,4.4L3.5,6.6L7.6,2.1" transform="translate(359.9 0)"/>
</g>
</svg>

<!-- status boxes -->
<div class="blk" style="left:100px;top:543px;width:59.2px;height:17.6px"></div>
<div class="blk" style="left:231px;top:543px;width:103px;height:17.6px"></div>
<div class="blk" style="left:413.8px;top:543px;width:59px;height:17.6px"></div>

<!-- buttons -->
<div class="btn dis" style="left:6.6px;width:53.6px"></div>
<div class="btn" style="left:66.2px;width:53.8px"></div>
<div class="btn" style="left:143px;width:53.8px"></div>
<div class="btn" style="left:202.4px;width:53.8px"></div>
<div class="btn" style="left:279.4px;width:53.2px"></div>
<div class="btn" style="left:338.7px;width:53.8px"></div>
<div class="btn dis" style="left:743.6px;width:53.6px"></div>

<span class="t" style="font-size:9.50px;color:#000;transform:translate(21.63px,5.50px) scaleX(0.9030);">System Stability Test - AIDA64</span>
<span class="t" style="font-size:9.50px;color:#000;transform:translate(43.51px,39.60px) scaleX(0.8454);">Stress CPU</span>
<span class="t" style="font-size:9.50px;color:#000;transform:translate(43.54px,54.50px) scaleX(0.8271);">Stress FPU</span>
<span class="t" style="font-size:9.50px;color:#000;transform:translate(43.53px,69.60px) scaleX(0.8712);">Stress cache</span>
<span class="t" style="font-size:9.50px;color:#000;transform:translate(43.50px,83.50px) scaleX(0.9010);">Stress system memory</span>
<span class="t" style="font-size:9.50px;color:#000;transform:translate(43.52px,98.60px) scaleX(0.8826);">Stress local disks</span>
<span class="t" style="font-size:9.50px;color:#000;transform:translate(43.54px,113.50px) scaleX(0.8354);">Stress GPU(s)</span>
<span class="t" style="font-size:9.50px;color:#000;transform:translate(140.93px,43.60px) scaleX(0.9388);">Date &amp; Time</span>
<span class="t" style="font-size:9.50px;color:#000;transform:translate(251.55px,43.60px) scaleX(0.8754);">Status</span>
<span class="t" style="font-size:9.50px;color:#000;transform:translate(141.07px,59.60px) scaleX(0.8405);">22.01.2021 23:55:39</span>
<span class="t" style="font-size:9.50px;color:#000;transform:translate(251.48px,59.60px) scaleX(0.8956);">Stability Test: Started</span>
<span class="t" style="font-size:9.50px;color:#000;transform:translate(23.77px,135.60px) scaleX(0.8987);">Temperatures</span>
<span class="t" style="font-size:9.50px;color:#000;transform:translate(84.66px,135.60px) scaleX(0.9003);">Cooling Fans</span>
<span class="t" style="font-size:9.50px;color:#000;transform:translate(143.83px,135.60px) scaleX(0.8927);">Voltages</span>
<span class="t" style="font-size:9.50px;color:#000;transform:translate(185.00px,135.60px) scaleX(0.9067);">Powers</span>
<span class="t" style="font-size:9.50px;color:#000;transform:translate(221.92px,135.60px) scaleX(0.9225);">Clocks</span>
<span class="t" style="font-size:9.50px;color:#000;transform:translate(256.83px,134.60px) scaleX(0.9892);">Unified</span>
<span class="t" style="font-size:9.50px;color:#000;transform:translate(293.66px,135.60px) scaleX(0.9242);">Statistics</span>
<span class="t" style="font-size:9.20px;font-weight:bold;color:#e6e600;transform:translate(158.99px,154.60px) scaleX(0.8270);">CPU Clock (MHz)</span>
<span class="t" style="font-size:9.20px;font-weight:bold;color:#00e000;transform:translate(240.28px,154.60px) scaleX(0.7824);">CPU (°C)</span>
<span class="t" style="font-size:9.20px;font-weight:bold;color:#00c8dc;transform:translate(289.19px,154.60px) scaleX(0.8318);">CPU Core #1 (°C)</span>
<span class="t" style="font-size:9.20px;font-weight:bold;color:#ee2222;transform:translate(370.24px,154.60px) scaleX(0.8220);">CPU Core (V)</span>
<span class="t" style="font-size:9.20px;font-weight:bold;color:#f0c878;transform:translate(436.69px,154.60px) scaleX(0.8302);">CPU Package (W)</span>
<span class="t" style="font-size:9.20px;font-weight:bold;color:#ffffff;transform:translate(518.98px,154.60px) scaleX(0.8101);">Phison 1TB SM2801T24GKBB4S-E162 (°C)</span>
<span class="t" style="font-size:9.20px;color:#fff;transform:translate(57.49px,165.60px) scaleX(0.9128);">100</span>
<span class="t" style="font-size:9.20px;color:#fff;transform:translate(65.87px,310.60px) scaleX(1.0226);">0</span>
<span class="t" style="font-size:9.20px;color:#fff;transform:translate(90.10px,318.60px) scaleX(0.8920);">23:55:39</span>
<span class="t" style="font-size:9.20px;color:#00e000;transform:translate(751.46px,222.60px) scaleX(0.8267);">61</span>
<span class="t" style="font-size:9.20px;color:#00c8dc;transform:translate(770.75px,223.60px) scaleX(0.8854);">60</span>
<span class="t" style="font-size:9.20px;color:#fff;transform:translate(751.30px,254.50px) scaleX(0.9148);">39</span>
<span class="t" style="font-size:9.20px;color:#f0c878;transform:translate(752.05px,291.60px) scaleX(0.8531);">13.07</span>
<span class="t" style="font-size:9.20px;color:#e6e600;transform:translate(771.39px,289.50px) scaleX(0.9133);clip-path:inset(0 4.16px 0 0);">1500</span>
<span class="t" style="font-size:9.20px;color:#ee2222;transform:translate(752.04px,308.50px) scaleX(0.8624);">1.137</span>
<span class="t" style="font-size:9.20px;-webkit-text-stroke:0.30px #e6e600;color:#e6e600;transform:translate(280.84px,346.60px) scaleX(0.8494);">CPU Usage</span>
<span class="t" style="font-size:9.20px;color:#e8e8e8;transform:translate(328.68px,346.60px) scaleX(-1.2207);">|</span>
<span class="t" style="font-size:9.20px;-webkit-text-stroke:0.22px #f00000;color:#f00000;transform:translate(332.77px,346.60px) scaleX(0.9041);">CPU Throttling (max: 12%) - Overheating Detected!</span>
<span class="t" style="font-size:9.20px;color:#fff;transform:translate(31.17px,357.50px) scaleX(0.8658);">100%</span>
<span class="t" style="font-size:9.20px;color:#fff;transform:translate(40.11px,503.50px) scaleX(0.8609);">0%</span>
<span class="t" style="font-size:9.20px;color:#e6e600;transform:translate(751.78px,357.50px) scaleX(0.8495);">100%</span>
<span class="t" style="font-size:9.20px;color:#ee0000;transform:translate(751.90px,503.60px) scaleX(0.8482);">0%</span>
<span class="t" style="font-size:9.50px;color:#000;transform:translate(17.51px,545.60px) scaleX(0.9196);">Remaining Battery:</span>
<span class="t" style="font-size:9.50px;color:#000;transform:translate(175.53px,545.60px) scaleX(0.8864);">Test Started:</span>
<span class="t" style="font-size:9.50px;color:#000;transform:translate(351.14px,545.60px) scaleX(0.9036);">Elapsed Time:</span>
<span class="t" style="font-size:9.20px;font-weight:bold;color:#00dd00;transform:translate(113.81px,544.60px) scaleX(0.8559);">01:45:40</span>
<span class="t" style="font-size:9.20px;font-weight:bold;color:#00dd00;transform:translate(245.99px,544.60px) scaleX(0.8567);">22.01.2021 23:55:39</span>
<span class="t" style="font-size:9.20px;font-weight:bold;color:#00dd00;transform:translate(427.36px,544.60px) scaleX(0.8317);">00:14:12</span>
<span class="t" style="font-size:9.50px;color:#8a8a8a;transform:translate(23.92px,578.60px) scaleX(0.9108);">Start</span>
<span class="t" style="font-size:9.50px;color:#000;transform:translate(83.48px,578.60px) scaleX(0.9687);">Stop</span>
<span class="t" style="font-size:9.50px;color:#000;transform:translate(159.08px,578.60px) scaleX(0.9320);">Clear</span>
<span class="t" style="font-size:9.50px;color:#000;transform:translate(219.55px,578.60px) scaleX(0.8915);">Save</span>
<span class="t" style="font-size:9.50px;color:#000;transform:translate(292.69px,578.60px) scaleX(0.8793);">CPUID</span>
<span class="t" style="font-size:9.50px;color:#000;transform:translate(343.00px,578.60px) scaleX(0.8838);">Preferences</span>
<span class="t" style="font-size:9.50px;color:#8a8a8a;transform:translate(759.07px,578.60px) scaleX(0.9545);">Close</span>

<!-- mouse cursor -->
<svg class="abs" style="left:29px;top:580.8px;z-index:9" width="12.4" height="18.6" viewBox="0 0 12 18">
<path d="M0.6,0.8V13.6L3.6,10.8L5.7,15.8L7.7,14.9L5.6,10.1H9.6Z" fill="#fff" stroke="#000" stroke-width="0.9" stroke-linejoin="round"/>
</svg>
</body>
</html>
